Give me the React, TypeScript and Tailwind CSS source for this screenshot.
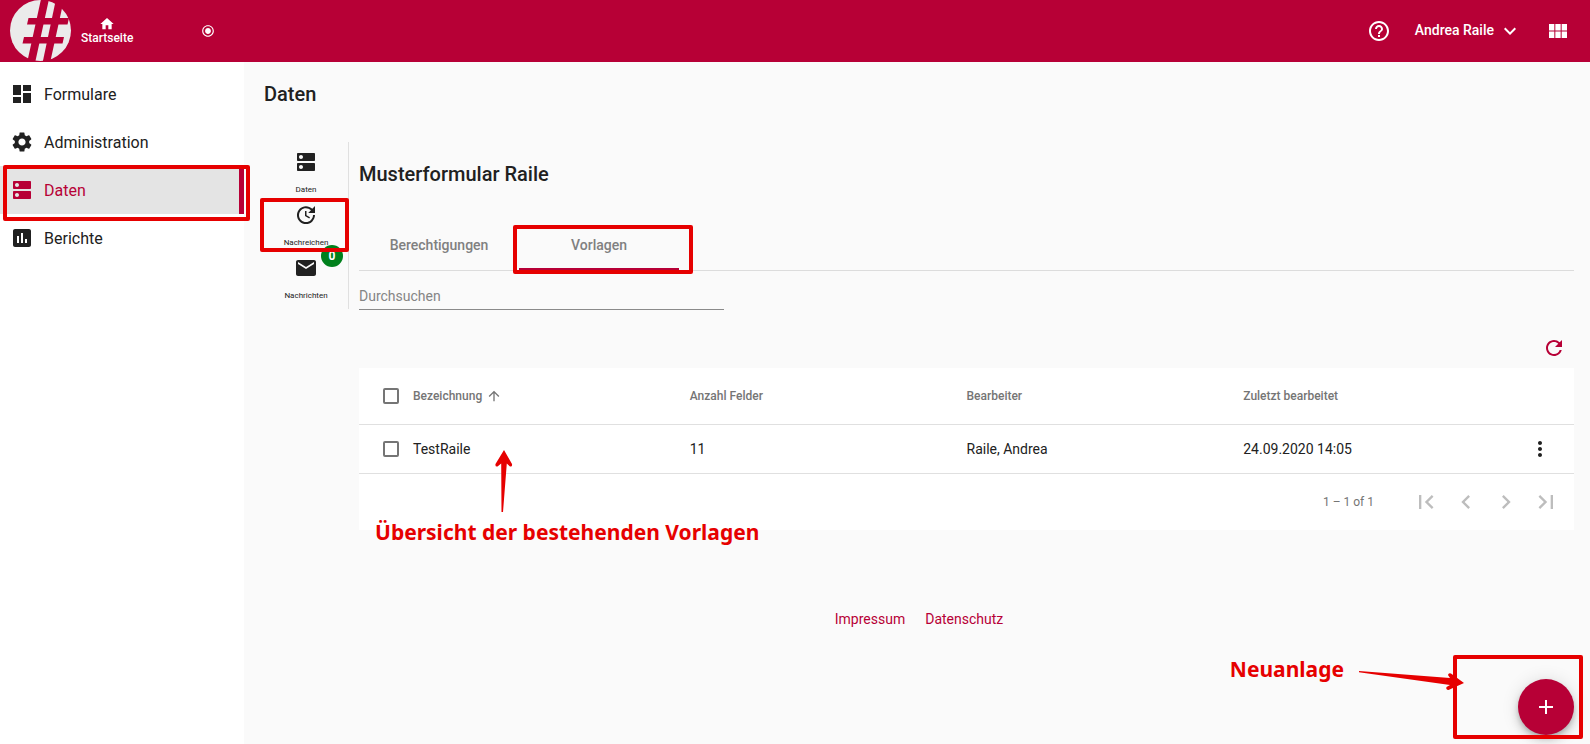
import type { ReactNode } from "react";
import type { IconType } from "react-icons";
import {
  MdAdd,
  MdArrowUpward,
  MdAssessment,
  MdChevronLeft,
  MdChevronRight,
  MdDashboard,
  MdDns,
  MdExpandMore,
  MdFirstPage,
  MdHelpOutline,
  MdHome,
  MdLastPage,
  MdMail,
  MdMoreVert,
  MdRadioButtonChecked,
  MdRefresh,
  MdSettings,
  MdUpdate,
  MdViewModule,
} from "react-icons/md";

const navItems: { label: string; icon: IconType; active?: boolean }[] = [
  { label: "Formulare", icon: MdDashboard },
  { label: "Administration", icon: MdSettings },
  { label: "Daten", icon: MdDns, active: true },
  { label: "Berichte", icon: MdAssessment },
];

const sideItems: { label: string; icon: IconType; badge?: number }[] = [
  { label: "Daten", icon: MdDns },
  { label: "Nachreichen", icon: MdUpdate },
  { label: "Nachrichten", icon: MdMail, badge: 0 },
];

function Logo() {
  return (
    <svg viewBox="0 0 62 62" className="size-[62px]" aria-hidden="true">
      <circle cx="30.5" cy="30.5" r="30.5" fill="#ebebeb" />
      <g fill="#b70036">
        <path d="M31 -1 H39 L25 63 H17 Z" />
        <path d="M46 -1 H54 L40 63 H32.500 Z" />
        <path d="M18.500 18 H59 L57.500 24.500 H17 Z" />
        <path d="M14 37 H54 L52.500 43.500 H12.500 Z" />
      </g>
    </svg>
  );
}

function TopBar() {
  return (
    <header className="flex h-[62px] items-center bg-[#b70036] pl-[10px] pr-5 text-white">
      <Logo />
      <a href="#start" className="ml-[9px] flex flex-col items-center pb-px text-xs font-medium leading-[13px]">
        <MdHome className="size-4" />
        Startseite
      </a>
      <button type="button" aria-label="Status" className="ml-[68px]">
        <MdRadioButtonChecked className="size-[14px]" />
      </button>
      <div className="ml-auto flex items-center">
        <button type="button" aria-label="Hilfe">
          <MdHelpOutline className="size-6" />
        </button>
        <button type="button" className="ml-6 flex items-center gap-1 text-sm font-medium">
          <span className="pb-[3px]">Andrea Raile</span>
          <MdExpandMore className="size-6" />
        </button>
        <button type="button" aria-label="Apps" className="ml-6">
          <MdViewModule className="size-6" />
        </button>
      </div>
    </header>
  );
}

function Sidebar() {
  return (
    <nav className="w-[244px] shrink-0 bg-white pt-2">
      {navItems.map(({ label, icon: Icon, active }) => (
        <a
          key={label}
          href={`#${label.toLowerCase()}`}
          className={
            active
              ? "flex h-12 items-center gap-[10px] border-r-[5px] border-[#b70036] bg-[#e4e4e4] pl-[10px] text-base text-[#b70036]"
              : "flex h-12 items-center gap-[10px] pl-[10px] text-base text-[#212121]"
          }
        >
          <Icon className="size-6" />
          <span className="pt-[2px]">{label}</span>
        </a>
      ))}
    </nav>
  );
}

function SideTabs() {
  return (
    <div className="flex w-[85px] shrink-0 flex-col border-r border-[#e0e0e0] pt-2">
      {sideItems.map(({ label, icon: Icon, badge }) => (
        <button
          key={label}
          type="button"
          className="relative flex h-[53px] flex-col items-center text-[8px] leading-3 text-[#212121]"
        >
          <Icon className="mb-[10px] size-6" />
          {label}
          {badge !== undefined && (
            <span className="absolute -top-[11px] right-[5px] flex size-[22px] items-center justify-center rounded-full bg-[#00801c] text-xs font-bold text-white">
              {badge}
            </span>
          )}
        </button>
      ))}
    </div>
  );
}

function Check({ label }: { label: string }) {
  return (
    <input
      type="checkbox"
      aria-label={label}
      className="block size-4 appearance-none rounded-[2px] border-2 border-[#757575] checked:bg-[#b70036]"
    />
  );
}

function PageButton({ label, children }: { label: string; children: ReactNode }) {
  return (
    <button type="button" disabled aria-label={label} className="flex size-10 items-center justify-center text-[#bdbdbd]">
      {children}
    </button>
  );
}

function DataTable() {
  return (
    <div className="bg-white text-[#212121]">
      <table className="w-full table-fixed text-left">
        <thead>
          <tr className="h-14 border-b border-[#e0e0e0] text-xs text-[#757575]">
            <th className="w-[54px] pl-6"><Check label="Alle auswählen" /></th>
            <th className="font-medium">
              <button type="button" className="flex items-center gap-1">
                Bezeichnung
                <MdArrowUpward className="size-4" />
              </button>
            </th>
            <th className="font-medium">Anzahl Felder</th>
            <th className="font-medium">Bearbeiter</th>
            <th className="font-medium">Zuletzt bearbeitet</th>
            <th className="w-[54px]" />
          </tr>
        </thead>
        <tbody>
          <tr className="h-[49px] border-b border-[#e0e0e0] text-sm">
            <td className="pl-6"><Check label="TestRaile auswählen" /></td>
            <td>TestRaile</td>
            <td>11</td>
            <td>Raile, Andrea</td>
            <td>24.09.2020 14:05</td>
            <td>
              <button type="button" aria-label="Aktionen" className="ml-2 block">
                <MdMoreVert className="size-6" />
              </button>
            </td>
          </tr>
        </tbody>
      </table>
      <div className="flex h-14 items-center justify-end pr-2 text-xs text-[#757575]">
        <span className="mr-8">1 – 1 of 1</span>
        <PageButton label="Erste Seite"><MdFirstPage className="size-7" /></PageButton>
        <PageButton label="Vorherige Seite"><MdChevronLeft className="size-7" /></PageButton>
        <PageButton label="Nächste Seite"><MdChevronRight className="size-7" /></PageButton>
        <PageButton label="Letzte Seite"><MdLastPage className="size-7" /></PageButton>
      </div>
    </div>
  );
}

function Annotations() {
  return (
    <div className="pointer-events-none absolute inset-0 font-['Noto_Sans',sans-serif] text-[21px] font-bold leading-7 text-[#e60000]">
      <div className="absolute left-[3px] top-[165px] h-14 w-[247px] rounded-[2px] border-4 border-[#e60000]" />
      <div className="absolute left-[260px] top-[198px] h-[54px] w-[89px] rounded-[2px] border-4 border-[#e60000]" />
      <div className="absolute left-[513px] top-[225px] h-[49px] w-[180px] rounded-[2px] border-4 border-[#e60000]" />
      <div className="absolute right-[7px] top-[655px] h-[84px] w-[130px] rounded-[2px] border-4 border-[#e60000]" />
      <svg className="absolute left-[494px] top-[449px] h-16 w-5" viewBox="0 0 20 64" fill="#e60000">
        <path d="M10 1 L18 15 Q18.500 18 16 17.500 L12.800 14.500 L9 63 H7.500 L7.200 14.500 L3.500 17.500 Q1 18 1.500 15 Z" />
      </svg>
      <p className="absolute left-[375px] top-[518px] whitespace-nowrap">Übersicht der bestehenden Vorlagen</p>
      <p className="absolute right-[246px] top-[655px] whitespace-nowrap">Neuanlage</p>
      <svg className="absolute right-[125px] top-[670px] h-6 w-[106px]" viewBox="0 0 106 24" fill="#e60000">
        <path d="M0 1 L91 8 L89 5 Q89.500 2.500 92 3.500 L105 13 L89.500 20 Q86.500 19.500 87.500 17 L91 15 L0 2.200 Z" />
      </svg>
    </div>
  );
}

export default function App() {
  return (
    <div className="relative flex min-h-screen flex-col bg-[#fafafa] font-[Roboto,sans-serif] text-[#212121]">
      <TopBar />
      <div className="flex grow">
        <Sidebar />
        <main className="min-w-0 grow pl-5 pr-4 pt-[18px]">
          <h1 className="text-xl font-medium leading-7">Daten</h1>
          <div className="mt-[34px] flex items-start">
            <SideTabs />
            <section className="min-w-0 grow pl-[10px] pt-[18px]">
              <h2 className="text-xl font-medium leading-7">Musterformular Raile</h2>
              <div className="mt-[34px] flex h-[49px] border-b border-[#dcdcdc] text-sm font-medium text-[#808080]">
                <button type="button" className="w-40 border-b-2 border-transparent">Berechtigungen</button>
                <button type="button" className="w-40 border-b-2 border-[#b70036]">Vorlagen</button>
              </div>
              <input
                type="text"
                aria-label="Durchsuchen"
                placeholder="Durchsuchen"
                className="mt-3 block h-[27px] w-[30%] border-b border-[#8a8a8a] bg-transparent text-sm outline-none placeholder:text-[#858585]"
              />
              <div className="mb-2 mt-[26px] flex justify-end pr-2">
                <button type="button" aria-label="Aktualisieren" className="text-[#b70036]">
                  <MdRefresh className="size-6" />
                </button>
              </div>
              <DataTable />
            </section>
          </div>
          <footer className="mt-[79px] flex justify-center gap-5 text-sm text-[#b70036]">
            <a href="#impressum">Impressum</a>
            <a href="#datenschutz">Datenschutz</a>
          </footer>
        </main>
      </div>
      <button
        type="button"
        aria-label="Neue Vorlage"
        className="absolute bottom-[9px] right-4 flex size-14 items-center justify-center rounded-full bg-[#b70036] text-white shadow-[0_3px_5px_-1px_rgba(0,0,0,0.2),0_6px_10px_rgba(0,0,0,0.14),0_1px_18px_rgba(0,0,0,0.12)]"
      >
        <MdAdd className="size-6" />
      </button>
      <Annotations />
    </div>
  );
}
